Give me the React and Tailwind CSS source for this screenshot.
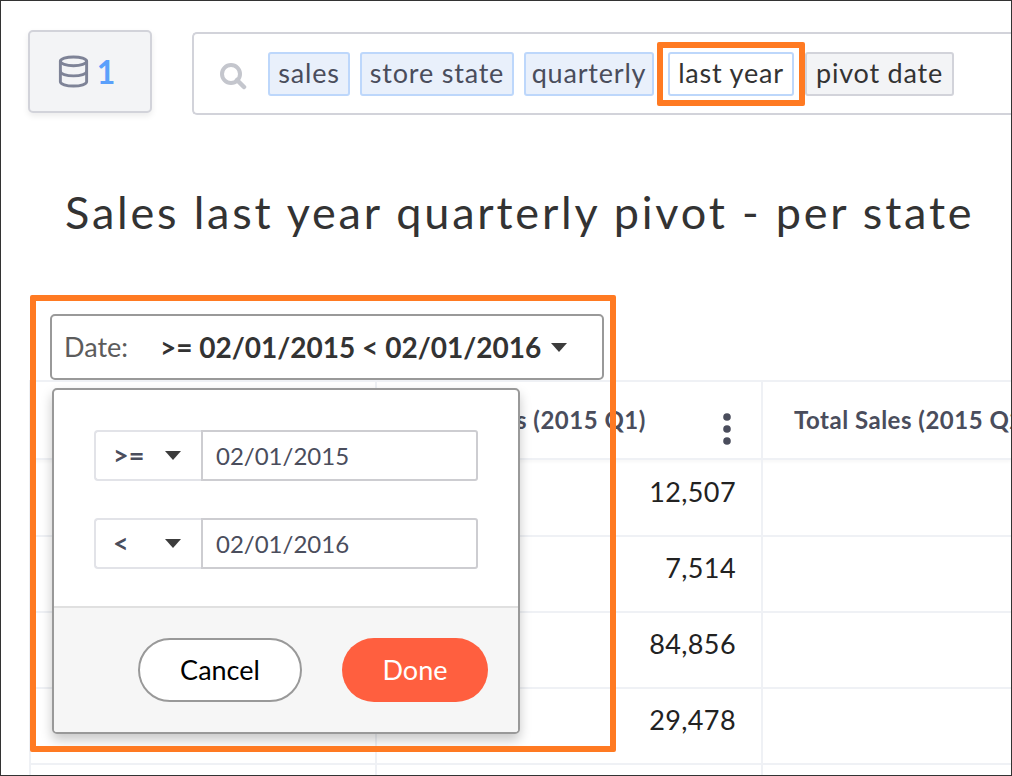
import React from "react";
import { Database } from "lucide-react";

const Tag = ({ label, className }) => (
  <div className={`h-[44px] flex items-center justify-center rounded-[3px] border-2 text-[27px] tracking-[0.8px] ${className}`}>{label}</div>
);

const Caret = ({ className = "" }) => (
  <svg width="16" height="9" viewBox="0 0 16 9" className={className}>
    <path d="M0 0H16L8 9Z" fill="#3c3c3c" />
  </svg>
);

const Cond = ({ op, date }) => (
  <div className="flex h-[51px]">
    <div className="w-[107px] flex items-center rounded-l-[4px] border-2 border-r-0 border-[#e2e3e8] pl-[17px] pr-[20px] justify-between">
      <span className="text-[27px] text-[#4a4d5c] font-bold">{op}</span>
      <Caret />
    </div>
    <div className="w-[277px] flex items-center rounded-r-[3px] border-2 border-[#cdcdd1] pl-[13px] text-[24px] text-[#4a4d5c]">{date}</div>
  </div>
);

const Row = ({ value, first }) => (
  <div className={`grid grid-cols-[346px_386px_1fr] border-b-2 border-[#eff1f5] ${first ? "h-[77px]" : "h-[76px]"}`}>
    <div className="border-r-2 border-[#eff1f5]" />
    <div className={`border-r-2 border-[#eff1f5] flex items-start justify-end pr-[25px] text-[27px] tracking-[0.4px] text-[#222] ${first ? "pt-[12px]" : "pt-[11px]"}`}>{value}</div>
    <div />
  </div>
);

export default function App() {
  return (
    <div className="relative w-[1012px] h-[776px] overflow-hidden bg-white border border-[#333] font-['Lato','Noto_Sans',sans-serif]">
      <header className="flex items-start pl-[27px] pt-[29px]">
        <div className="w-[124px] h-[83px] flex items-center justify-center gap-[6px] pr-[9px] rounded-[5px] border-2 border-[#d2d3da] bg-[#f3f4f6] shadow-[0_3px_6px_rgba(0,0,0,0.08)]">
          <Database size={35} strokeWidth={2} className="text-[#7e8397]" />
          <span className="text-[32px] font-bold text-[#5aa0fb]">1</span>
        </div>
        <div className="ml-[40px] mt-[2px] flex-1 h-[83px] flex items-center gap-[10px] rounded-l-[5px] border-2 border-r-0 border-[#d2d3da] pl-[25px]">
          <svg width="28" height="28" viewBox="0 0 28 28" className="mr-[11px] mt-[4px]">
            <circle cx="12" cy="12" r="9" fill="none" stroke="#c4c6cd" strokeWidth="4" />
            <path d="M18 18L25 25" stroke="#c4c6cd" strokeWidth="4.5" strokeLinecap="round" />
          </svg>
          <Tag label="sales" className="w-[82px] border-[#bdd7fb] bg-[#e9f0fb] text-[#4a4d5c]" />
          <Tag label="store state" className="w-[154px] border-[#bdd7fb] bg-[#e9f0fb] text-[#4a4d5c]" />
          <Tag label="quarterly" className="w-[130px] border-[#bdd7fb] bg-[#e9f0fb] text-[#4a4d5c]" />
          <Tag label="last year" className="ml-[4px] w-[126px] border-[#bdd7fb] bg-white text-[#333]" />
          <Tag label="pivot date" className="w-[149px] ml-[1px] border-[#d2d3da] bg-[#f3f4f6] text-[#333]" />
        </div>
      </header>

      <h1 className="mt-[67px] ml-[64px] text-[45px] leading-[60px] font-normal tracking-[2.8px] text-[#333] whitespace-nowrap">
        Sales last year quarterly pivot - per state
      </h1>

      <div className="mt-[72px] ml-[49px] w-[554px] h-[66px] flex items-center rounded-[5px] border-2 border-[#999] pl-[12px]">
        <span className="w-[96px] text-[27px] text-[#5c5c5c]">Date:</span>
        <span className="text-[28px] font-bold text-[#333] whitespace-nowrap">&gt;= 02/01/2015 &lt; 02/01/2016</span>
        <Caret className="ml-[10px]" />
      </div>

      <section className="ml-[28px] border-l-2 border-[#eff1f5]">
        <div className="grid grid-cols-[346px_386px_1fr] h-[80px] border-y-2 border-[#eff1f5] shadow-[0_2px_3px_rgba(0,0,0,0.03)]">
          <div className="border-r-2 border-[#eff1f5]" />
          <div className="border-r-2 border-[#eff1f5] relative pl-[32px] pt-[20px] text-[24px] tracking-[0.5px] font-bold text-[#4a4d5c] whitespace-nowrap">
            Total Sales (2015 Q1)
            <svg width="10" height="34" viewBox="0 0 10 34" className="absolute left-[345px] top-[30px]">
              <circle cx="5" cy="5" r="3.8" fill="#4a4d5c" />
              <circle cx="5" cy="17" r="3.8" fill="#4a4d5c" />
              <circle cx="5" cy="29" r="3.8" fill="#4a4d5c" />
            </svg>
          </div>
          <div className="pl-[31px] pt-[20px] text-[24px] tracking-[0.5px] font-bold text-[#4a4d5c] whitespace-nowrap">Total Sales (2015 Q2)</div>
        </div>
        <Row value="12,507" first />
        <Row value="7,514" />
        <Row value="84,856" />
        <Row value="29,478" />
        <Row value="" />
      </section>

      <div className="absolute left-[51px] top-[387px] w-[468px] h-[346px] flex flex-col rounded-[5px] border-2 border-[#999] bg-white shadow-[0_6px_12px_rgba(0,0,0,0.22)] overflow-hidden">
        <div className="h-[218px] flex flex-col gap-[37px] pl-[40px] pt-[40px] border-b-2 border-[#e0e0e0]">
          <Cond op=">=" date="02/01/2015" />
          <Cond op="<" date="02/01/2016" />
        </div>
        <div className="flex-1 bg-[#f6f6f6] flex items-start gap-[40px] pl-[84px] pt-[30px]">
          <button className="w-[164px] h-[64px] rounded-full border-2 border-[#999] bg-white text-[27px] text-black">Cancel</button>
          <button className="w-[146px] h-[64px] rounded-full bg-[#ff5f3f] text-[27px] text-white">Done</button>
        </div>
      </div>

      <div className="absolute left-[656px] top-[41px] w-[148px] h-[64px] rounded-[2px] border-[6px] border-[#ff7a22] pointer-events-none" />
      <div className="absolute left-[29px] top-[294px] w-[586px] h-[457px] rounded-[2px] border-[6px] border-[#ff7a22] pointer-events-none" />
    </div>
  );
}
